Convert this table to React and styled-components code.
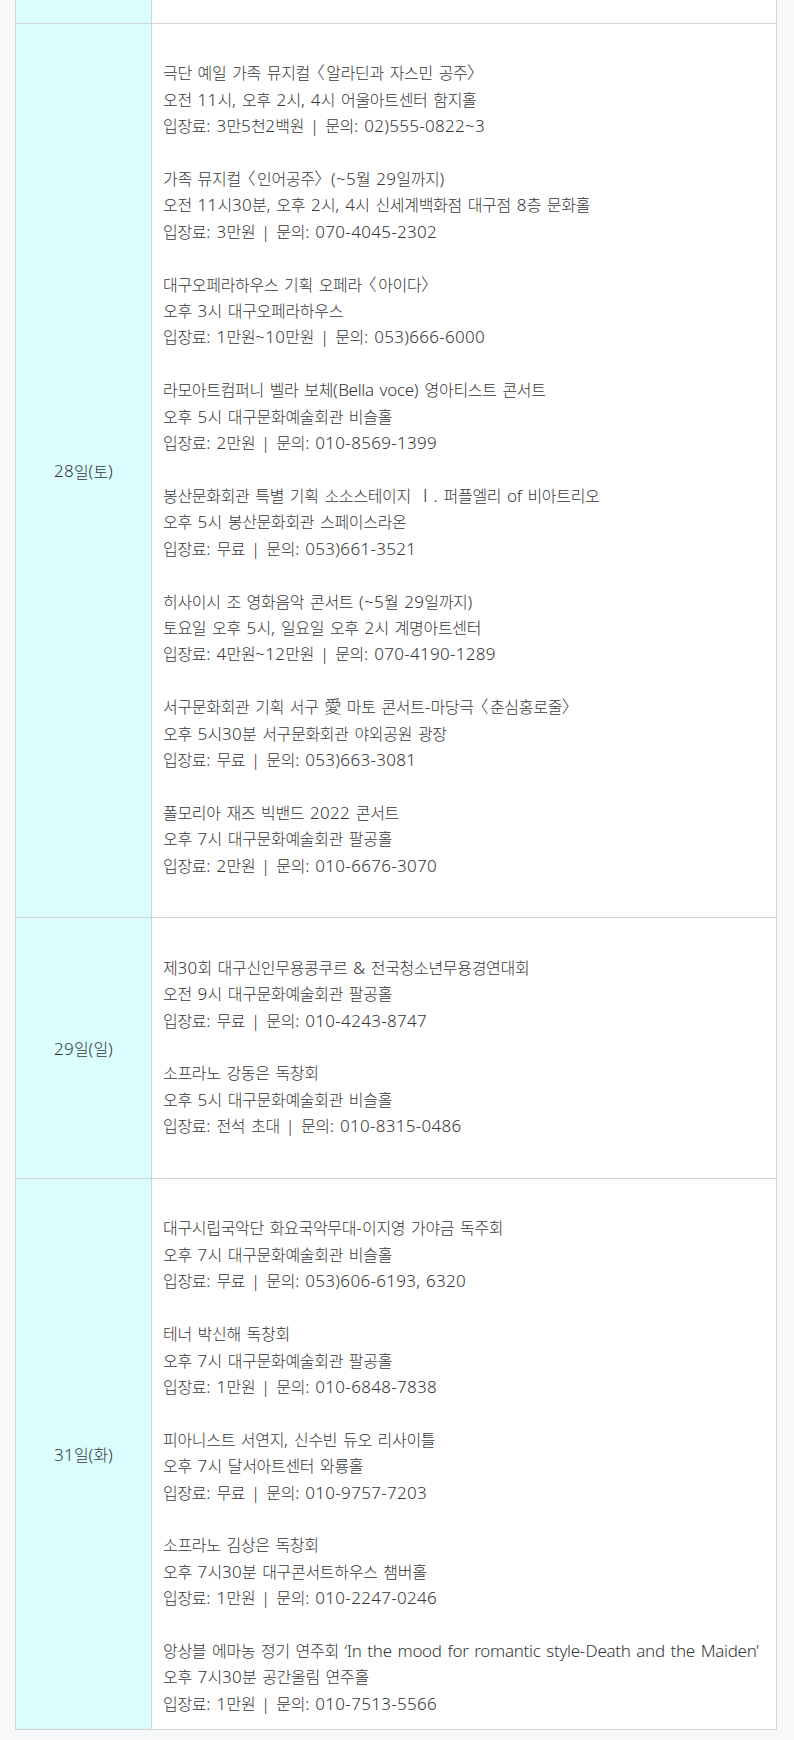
import React from "react";
import styled, { createGlobalStyle, css } from "styled-components";

const GlobalStyle = createGlobalStyle`
  html, body { margin: 0; padding: 0; }
  body {
    background: #f7f8fa;
    font-family: "Noto Sans", "Noto Sans CJK KR", sans-serif;
    -webkit-font-smoothing: antialiased;
  }
`;

const Page = styled.div`
  min-height: 1740px;
  box-sizing: border-box;
  padding: 0 17px 0 15px;
  background: #f7f8fa;
`;

const Table = styled.div`
  background: #fff;
  border-left: 1px solid #d4d4d4;
  border-right: 1px solid #d4d4d4;
  border-bottom: 1px solid #d4d4d4;
`;

const Row = styled.div`
  display: grid;
  grid-template-columns: 136px 1fr;
  border-top: ${(p) => (p.$first ? "none" : "1px solid #d4d4d4")};
  min-height: ${(p) => (p.$stub ? "23px" : "0")};
`;

const DateCell = styled.div`
  background: #dafdfd;
  border-right: 1px solid #d4d4d4;
  display: flex;
  align-items: center;
  justify-content: center;
  font-size: 16px;
  letter-spacing: -0.3px;
  font-weight: 300;
  color: #363636;
`;

const Content = styled.div`
  padding: 10px 11px 12px 11px;
  font-size: 16px;
  line-height: 26.4px;
  letter-spacing: -0.3px;
  font-weight: 300;
  color: #363636;
`;

const Line = styled.p`
  margin: 0;
  white-space: nowrap;
`;

/* Non-Hangul runs: Latin letters, figures and angle brackets are set
   slightly larger than Hangul, as in the original Korean web font. */
const runKinds = {
  latin: css`
    letter-spacing: -0.3px;
  `,
  num: css`
    letter-spacing: 0.3px;
  `,
  mark: css`
    letter-spacing: 2px;
    font-feature-settings: "palt";
  `,
};

const Run = styled.span`
  font-size: 17px;
  word-spacing: 1.6px;
  ${(p) => runKinds[p.$kind]}
`;

const TOKEN = /([\uAC00-\uD7A3\u3131-\u318E]+|[0-9:|()\-~,.]+|[〈〉]|[^\uAC00-\uD7A3\u3131-\u318E0-9:|()\-~,.〈〉]+)/g;
const IS_HANGUL = /^[\uAC00-\uD7A3\u3131-\u318E]+$/;
const IS_NUM = /^[0-9:|()\-~,.]+$/;
const IS_MARK = /^[〈〉]$/;

function Mixed({ text }) {
  const parts = text.match(TOKEN) || [];
  return parts.map((part, i) => {
    if (IS_HANGUL.test(part)) return <React.Fragment key={i}>{part}</React.Fragment>;
    const kind = IS_MARK.test(part) ? "mark" : IS_NUM.test(part) ? "num" : "latin";
    return (
      <Run key={i} $kind={kind}>
        {part}
      </Run>
    );
  });
}

const rows = [
  {
    date: "28일(토)",
    trailing: true,
    events: [
      ["극단 예일 가족 뮤지컬 〈알라딘과 자스민 공주〉", "오전 11시, 오후 2시, 4시 어울아트센터 함지홀", "입장료: 3만5천2백원 | 문의: 02)555-0822~3"],
      ["가족 뮤지컬 〈인어공주〉 (~5월 29일까지)", "오전 11시30분, 오후 2시, 4시 신세계백화점 대구점 8층 문화홀", "입장료: 3만원 | 문의: 070-4045-2302"],
      ["대구오페라하우스 기획 오페라 〈아이다〉", "오후 3시 대구오페라하우스", "입장료: 1만원~10만원 | 문의: 053)666-6000"],
      ["라모아트컴퍼니 벨라 보체(Bella voce) 영아티스트 콘서트", "오후 5시 대구문화예술회관 비슬홀", "입장료: 2만원 | 문의: 010-8569-1399"],
      ["봉산문화회관 특별 기획 소소스테이지 Ⅰ. 퍼플엘리 of 비아트리오", "오후 5시 봉산문화회관 스페이스라온", "입장료: 무료 | 문의: 053)661-3521"],
      ["히사이시 조 영화음악 콘서트 (~5월 29일까지)", "토요일 오후 5시, 일요일 오후 2시 계명아트센터", "입장료: 4만원~12만원 | 문의: 070-4190-1289"],
      ["서구문화회관 기획 서구 愛 마토 콘서트-마당극 〈춘심홍로줄〉", "오후 5시30분 서구문화회관 야외공원 광장", "입장료: 무료 | 문의: 053)663-3081"],
      ["폴모리아 재즈 빅밴드 2022 콘서트", "오후 7시 대구문화예술회관 팔공홀", "입장료: 2만원 | 문의: 010-6676-3070"],
    ],
  },
  {
    date: "29일(일)",
    trailing: true,
    events: [
      ["제30회 대구신인무용콩쿠르 & 전국청소년무용경연대회", "오전 9시 대구문화예술회관 팔공홀", "입장료: 무료 | 문의: 010-4243-8747"],
      ["소프라노 강동은 독창회", "오후 5시 대구문화예술회관 비슬홀", "입장료: 전석 초대 | 문의: 010-8315-0486"],
    ],
  },
  {
    date: "31일(화)",
    trailing: false,
    events: [
      ["대구시립국악단 화요국악무대-이지영 가야금 독주회", "오후 7시 대구문화예술회관 비슬홀", "입장료: 무료 | 문의: 053)606-6193, 6320"],
      ["테너 박신해 독창회", "오후 7시 대구문화예술회관 팔공홀", "입장료: 1만원 | 문의: 010-6848-7838"],
      ["피아니스트 서연지, 신수빈 듀오 리사이틀", "오후 7시 달서아트센터 와룡홀", "입장료: 무료 | 문의: 010-9757-7203"],
      ["소프라노 김상은 독창회", "오후 7시30분 대구콘서트하우스 챔버홀", "입장료: 1만원 | 문의: 010-2247-0246"],
      ["앙상블 에마농 정기 연주회 \u2018In the mood for romantic style-Death and the Maiden\u2019", "오후 7시30분 공간울림 연주홀", "입장료: 1만원 | 문의: 010-7513-5566"],
    ],
  },
];

function buildLines(row) {
  const lines = [""];
  row.events.forEach((ev, i) => {
    if (i > 0) lines.push("");
    lines.push(...ev);
  });
  if (row.trailing) lines.push("");
  return lines;
}

export default function App() {
  return (
    <>
      <GlobalStyle />
      <Page>
        <Table>
          <Row $first $stub>
            <DateCell />
            <Content />
          </Row>
          {rows.map((row) => (
            <Row key={row.date}>
              <DateCell>
                <Mixed text={row.date} />
              </DateCell>
              <Content>
                {buildLines(row).map((t, i) => (
                  <Line key={i}>{t ? <Mixed text={t} /> : "\u00a0"}</Line>
                ))}
              </Content>
            </Row>
          ))}
        </Table>
      </Page>
    </>
  );
}
